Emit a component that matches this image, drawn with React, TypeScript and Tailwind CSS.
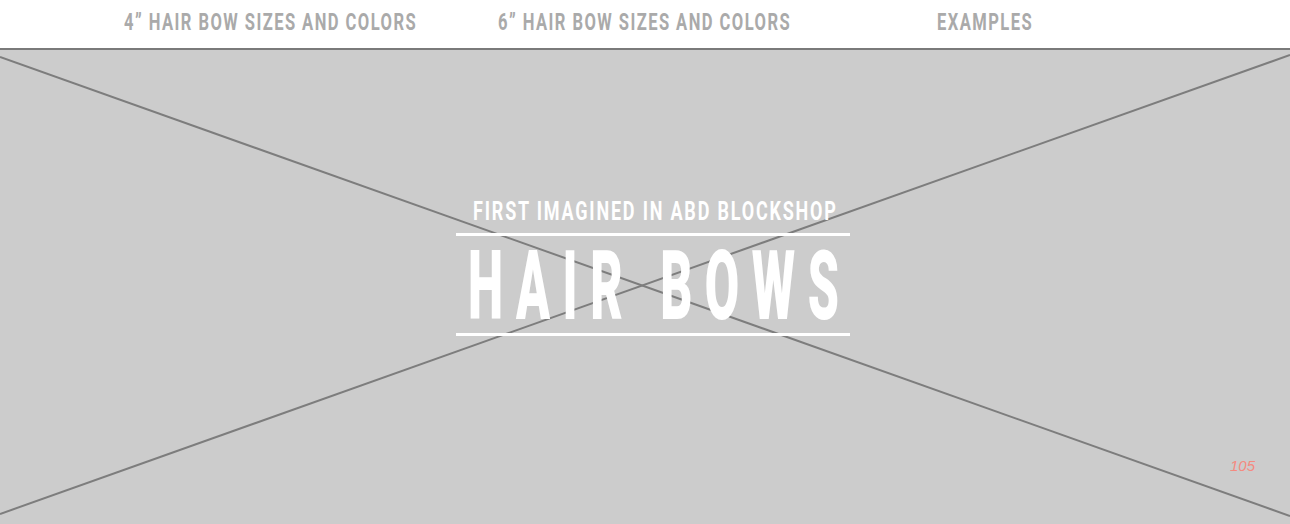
import React from 'react';

const roboto = { fontFamily: 'Roboto, "Liberation Sans", sans-serif' };

const NavItem = ({ label, width }: { label: string; width: string }) => (
  <a href="#" className={`${width} shrink-0 block`}>
    <span className="inline-block whitespace-nowrap origin-left scale-x-[0.72] text-[#aaaaaa] font-bold text-[23px] tracking-[2px] uppercase leading-none">
      {label}
    </span>
  </a>
);

const App = () => {
  return (
    <div className="w-[1290px] h-[524px] overflow-hidden bg-white" style={roboto}>
      <header className="h-[50px] flex items-center pl-[124px] border-b-2 border-[#7a7a7a]">
        <NavItem label="4” Hair Bow Sizes and Colors" width="w-[374px]" />
        <NavItem label="6” Hair Bow Sizes and Colors" width="w-[439px]" />
        <NavItem label="Examples" width="w-[200px]" />
      </header>

      <section className="relative h-[474px] bg-[#cccccc]">
        {/* placeholder image cross */}
        <svg className="absolute inset-0 w-full h-full" viewBox="0 0 1290 474" preserveAspectRatio="none">
          <line x1="0" y1="7" x2="1290" y2="466" stroke="#7d7d7d" strokeWidth="2" />
          <line x1="0" y1="464" x2="1290" y2="5" stroke="#7d7d7d" strokeWidth="2" />
        </svg>

        <div className="relative flex justify-center pl-4 pt-[149px]">
          <div className="w-[394px] flex flex-col items-center text-white">
            <p className="whitespace-nowrap scale-x-[0.72] text-[25px] font-bold tracking-[2.5px] leading-none uppercase pl-[6px]">
              First imagined in ABD Blockshop
            </p>
            <div className="w-full h-[3px] bg-white mt-[9px]" />
            <h1 className="whitespace-nowrap scale-x-[0.52] text-[96px] font-black tracking-[24px] leading-none uppercase mt-[2px] pl-[24px]">
              Hair Bows
            </h1>
            <div className="w-full h-[3px] bg-white -mt-px" />
          </div>
        </div>

        <span className="absolute right-[35px] bottom-[47px] text-[15px] italic text-[#f58a80]" style={{ fontFamily: '"Liberation Sans", Arial, sans-serif' }}>
          105
        </span>
      </section>
    </div>
  );
};

export default App;
